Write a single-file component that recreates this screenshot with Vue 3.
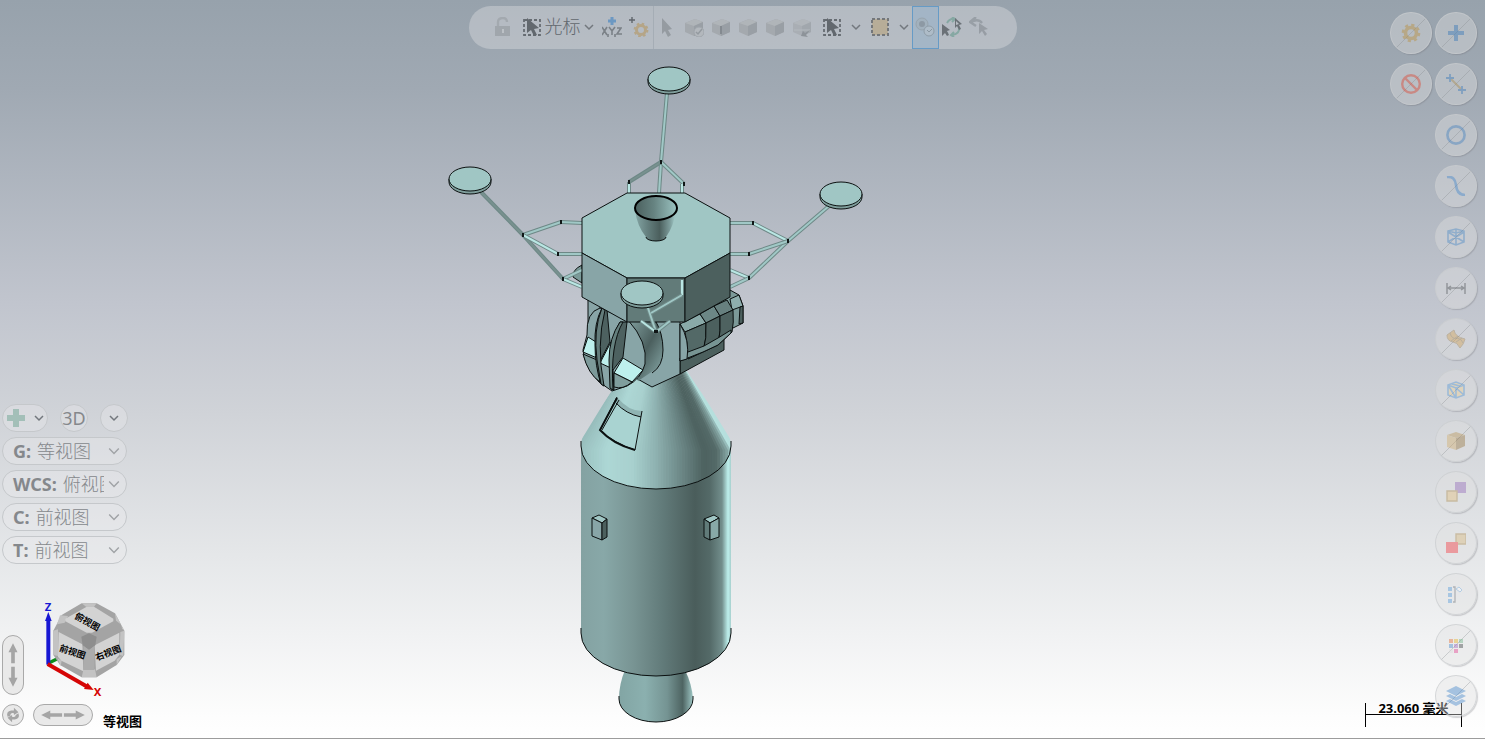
<script setup>
import { ref } from 'vue'

const cube = '<path d="M1 6 11 2 19 5 19 15 10 19 1 15Z" fill="#a4a9ae"/><path d="M1 6 11 2 19 5 10 9Z" fill="#b0b5b9"/><path d="M10 9 19 5V15L10 19Z" fill="#999fa5"/>'
const selectCursor = '<rect x="2" y="3" width="16" height="15" fill="none" stroke="#666c72" stroke-width="1.800" stroke-dasharray="3 2"/><path d="M5 1V16L9 13 12 19 15 18 12 12 17 11Z" fill="#62686e"/>'
const gear = '<g fill="none" stroke="#b98a2e"><circle cx="10" cy="10" r="5.500" stroke-width="3.600"/><circle cx="10" cy="10" r="8" stroke-width="2.600" stroke-dasharray="3.140 3.140"/></g>'

const icons = {
  lock: '<path d="M5 10V5Q5 1 10 1 14 1 14 5" fill="none" stroke="#a3a9af" stroke-width="2.400"/><path d="M2 9H17V19H2Z" fill="#a0a6ac"/><path d="M10 12V16" stroke="#bcc1c6" stroke-width="2"/>',
  selectCursor,
  xyz: '<path d="M10 0V8M6 4H14" stroke="#6c98c2" stroke-width="3"/><g fill="none" stroke="#7b8187" stroke-width="1.600"><path d="M0 10 5 18M5 10 0 18M7 10 10 14 13 10M10 14V18M15 11H19L15 17H20"/><path d="M6 17V20M13 17V20"/></g>',
  plusGear: '<path d="M3 0V6M0 3H6" stroke="#60666c" stroke-width="1.400"/><g fill="none" stroke="#b5a587"><circle cx="12" cy="13" r="4.500" stroke-width="3"/><circle cx="12" cy="13" r="6.400" stroke-width="2" stroke-dasharray="2.510 2.510"/></g>',
  cursor: '<path d="M5 1V17L8 14 11 20 14 18 11 13 15 12Z" fill="#959ba1"/>',
  cubeCheck: cube + '<circle cx="15" cy="15" r="5" fill="#b3b8bd" stroke="#a0a6ac"/><path d="M12 15 14 17 18 12" fill="none" stroke="#949aa0" stroke-width="1.500"/>',
  cubeEdge: cube + '<path d="M10 9V17" stroke="#848a90" stroke-width="2"/>',
  cube,
  cubeArrow: '<g opacity=".7">' + cube + '</g><path d="M2 13H18" stroke="#b3b9be"/><path d="M9 19 11 14 13 16 18 13 14 18 16 20Z" fill="#8d9399"/>',
  area: '<rect x="2" y="2" width="16" height="16" fill="#b7ad98" stroke="#74777a" stroke-width="2" stroke-dasharray="3 2"/>',
  solids: '<circle cx="7" cy="7" r="6" fill="#a2b1bd" stroke="#97a4ae"/><circle cx="7" cy="7" r="3" fill="#8d99a4"/><circle cx="14" cy="14" r="5" fill="#aebcc8" stroke="#8f9da8"/><path d="M12 13 14 15 17 12" fill="none" stroke="#8997a2"/>',
  swap: '<path d="M5 6Q8 1 13 2M17 10Q18 17 10 18M10 0 13 2 10 5M12 15 9 18 12 20M3 13Q4 16 6 17" fill="none" stroke="#86a8a3" stroke-width="2"/><path d="M0 7V19L3 16 5 19 7 18 5 14 8 13ZM13 1V11L15 9 17 13 19 12 17 8 20 7Z" fill="#6b7177"/><path d="M14 4V8L17 7Z" fill="#b7bdc3"/>',
  undo: '<path d="M2 5Q9 1 13 6M7 0 1 5 7 9" fill="none" stroke="#989fa6" stroke-width="2.400"/><path d="M10 6V17L13 14 16 19 18 17 15 13 19 12Z" fill="#979da4"/>',
  gear,
  forbid: '<g fill="none" stroke="#e03b25" stroke-width="2.400"><circle cx="10" cy="10" r="8.800"/><path d="M4 4 16 16"/></g>',
  plus: '<path d="M10 2V18M2 10H18" stroke="#2a71b8" stroke-width="4"/>',
  line: '<path d="M5 5 15 15" stroke="#a88743" stroke-width="2"/><path d="M4 0V8M0 4H8M16 12V20M12 16H20" stroke="#2a71b8" stroke-width="1.800"/>',
  circle: '<circle cx="10" cy="10" r="8.600" fill="none" stroke="#3a7bbe" stroke-width="2.600"/>',
  curve: '<path d="M1 1Q9 0 10 9 11 19 19 19" fill="none" stroke="#3a82cb" stroke-width="2.600"/>',
  wireCube: '<g fill="none" stroke="#3f83c5" stroke-width="1.600"><path d="M2 4 10 2 18 4V15L10 18 2 15ZM2 4 10 6 18 4M10 2V18M2 15 18 5M2 5 18 15"/></g>',
  dimension: '<path d="M1 5V16M19 5V16M1 10H19M5 8 2 10 5 12M15 8 18 10 15 12" fill="none" stroke="#3f4347" stroke-width="1.500"/>',
  surface: '<path d="M1 6 8 1Q9 8 19 10Q18 15 14 19Q11 13 7 13 1 12 1 6Z" fill="#d4a14c" stroke="#9c8255"/><path d="M4 4Q6 11 11 9 16 10 17 14M5 12 12 7M10 13 16 9" fill="none" stroke="#947a4b"/>',
  mesh: '<path d="M2 5 10 2 18 5V15L10 18 2 15Z" fill="#efcf91"/><path d="M2 5 10 2 18 5V15L10 18 2 15ZM2 5 10 8 18 5M10 8V18M2 5 10 18M10 8 18 15M6 4 14 6" fill="none" stroke="#4c92d6" stroke-width="1.600"/>',
  solid: '<path d="M1 4 10 1 19 4 10 7Z" fill="#b6904f"/><path d="M1 4 10 7V19L1 16Z" fill="#d1ab67"/><path d="M10 7 19 4V15L10 19Z" fill="#947138"/>',
  planes: '<path d="M9 0H20V11H9Z" fill="#8f62b8"/><path d="M1 9H11V19H1Z" fill="#e4be79" stroke="#a98546" stroke-width="1.400"/>',
  planesRed: '<path d="M10 1H20V11H10Z" fill="#d9b878" stroke="#a98546" stroke-width="1.400"/><path d="M0 9H12V20H0Z" fill="#f52e35"/>',
  tree: '<path d="M2 3H6V7H2ZM2 9H6V13H2ZM2 15H6V19H2Z" fill="#4b95d8"/><path d="M7 3H9V18H7" fill="none" stroke="#60666c" stroke-width="1.300"/><path d="M10 5 13 3 16 6 14 8Z" fill="#fff" stroke="#68a6dc"/>',
  palette: '<path d="M3 4H7V8H3Z" fill="#e5672a"/><path d="M8 4H12V8H8Z" fill="#e6ad18"/><path d="M13 4H17V8H13Z" fill="#68b183"/><path d="M3 9H7V13H3Z" fill="#3b83cb"/><path d="M8 9H12V13H8Z" fill="#9863bd"/><path d="M13 9H17V13H13Z" fill="#34373a"/><path d="M3 14H7V18H3Z" fill="#ddd"/><path d="M8 14H12V18H8Z" fill="#e4358c"/>',
  layers: '<path d="M0 5 10 0 20 5 10 10Z" fill="#367fc9"/><path d="M0 10 4 8 10 11 16 8 20 10 10 15ZM0 15 4 13 10 16 16 13 20 15 10 20Z" fill="#367fc9"/>'
}

const filterTools = [
  { icon: 'cursor', label: '选择' },
  { icon: 'cubeCheck', label: '选择实体' },
  { icon: 'cubeEdge', label: '选择边界' },
  { icon: 'cube', label: '选择面' },
  { icon: 'cube', label: '选择主体' },
  { icon: 'cubeArrow', label: '选择背面' }
]

const endTools = [
  { icon: 'solids', label: '验证选择', active: true },
  { icon: 'swap', label: '反选' },
  { icon: 'undo', label: '选择上次' }
]

const leftPalette = [
  { icon: 'gear', label: '设置', slash: true },
  { icon: 'forbid', label: '清除', slash: true }
]

const rightPalette = [
  { icon: 'plus', label: '点', slash: true },
  { icon: 'line', label: '线', slash: true },
  { icon: 'circle', label: '圆弧', slash: true },
  { icon: 'curve', label: '曲线', slash: true },
  { icon: 'wireCube', label: '线框', slash: true },
  { icon: 'dimension', label: '标注', slash: true },
  { icon: 'surface', label: '曲面', slash: true },
  { icon: 'mesh', label: '网格', slash: true },
  { icon: 'solid', label: '实体', slash: true },
  { icon: 'planes', label: '结果' },
  { icon: 'planesRed', label: '群组' },
  { icon: 'tree', label: '命名' },
  { icon: 'palette', label: '颜色', slash: true },
  { icon: 'layers', label: '层别', slash: true }
]

const viewNames = ['等视图', '俯视图', '前视图', '右视图']
const views = ref([
  { key: 'G', value: '等视图' },
  { key: 'WCS', value: '俯视图' },
  { key: 'C', value: '前视图' },
  { key: 'T', value: '前视图' }
])

// Cone shading: thin wedges from the apex, coloured along the stops
const stops = [
  [0, [150, 188, 187]],
  [0.2, [173, 215, 213]],
  [0.36, [168, 208, 206]],
  [0.5, [143, 178, 177]],
  [0.65, [110, 138, 137]],
  [0.8, [77, 98, 96]],
  [0.88, [84, 106, 104]],
  [0.95, [135, 168, 166]],
  [0.98, [190, 236, 233]],
  [1, [176, 214, 212]]
]

function shade(t) {
  let i = 1
  while (i < stops.length - 1 && t > stops[i][0]) i++
  const [t0, a] = stops[i - 1]
  const [t1, b] = stops[i]
  const k = (t - t0) / (t1 - t0)
  return `rgb(${a.map((v, n) => Math.round(v + (b[n] - v) * k)).join(',')})`
}

const wedgeCount = 60
const wedges = Array.from({ length: wedgeCount }, (_, i) => {
  const x0 = 575 + (161 * i) / wedgeCount
  const x1 = 575 + (161 * (i + 1)) / wedgeCount + 1
  return { points: `656,318 ${x0},450 ${x0},500 ${x1},500 ${x1},450`, fill: shade((i + 0.5) / wedgeCount) }
})

const legs = [
  [481, 192, 523, 235, 'dark'], [523, 235, 563, 279, 'dark'],
  [523, 235, 561, 222, 'mid'], [561, 222, 582, 223, 'mid'],
  [523, 235, 558, 254, 'light'], [558, 254, 582, 254, 'mid'],
  [563, 279, 582, 270, 'mid'], [563, 279, 582, 287, 'light'],
  [667, 93, 661, 162, 'mid'], [661, 162, 659, 193, 'mid'],
  [661, 162, 629, 182, 'dark'], [629, 182, 629, 193, 'light'],
  [661, 162, 684, 184, 'mid'], [682, 184, 682, 193, 'light'],
  [829, 206, 788, 241, 'mid'], [788, 241, 749, 278, 'mid'],
  [788, 241, 753, 223, 'light'], [753, 223, 730, 223, 'mid'],
  [788, 241, 749, 254, 'mid'], [749, 254, 730, 254, 'mid'],
  [749, 278, 730, 270, 'light'], [749, 278, 730, 287, 'mid']
]

const frontLegs = [
  [647, 305, 656, 332, 'mid'],
  [656, 332, 641, 321, 'light'],
  [656, 332, 670, 321, 'mid'],
  [682, 280, 682, 295, 'light'],
  [682, 295, 651, 313, 'mid']
]

const joints = [
  [523, 235], [561, 222], [558, 254], [563, 279], [661, 162], [629, 182],
  [684, 184], [788, 241], [753, 223], [749, 254], [749, 278]
]

const pads = [[669, 79], [470, 179], [841, 194], [642, 293]]
</script>

<template>
  <main class="viewport">
    <svg class="model" viewBox="0 0 1485 740" aria-hidden="true">
      <defs>
        <linearGradient id="barrel">
          <stop offset="0" stop-color="#84a2a2" />
          <stop offset=".15" stop-color="#88a8a8" />
          <stop offset=".35" stop-color="#789493" />
          <stop offset=".55" stop-color="#617a79" />
          <stop offset=".76" stop-color="#4a5d5b" />
          <stop offset=".86" stop-color="#546a68" />
          <stop offset=".94" stop-color="#728e8c" />
          <stop offset=".98" stop-color="#bdf0ed" />
          <stop offset="1" stop-color="#a7cfcd" />
        </linearGradient>
        <linearGradient id="engine">
          <stop offset="0" stop-color="#82a5a4" />
          <stop offset=".35" stop-color="#8bb0af" />
          <stop offset=".65" stop-color="#759493" />
          <stop offset=".86" stop-color="#4e6462" />
          <stop offset="1" stop-color="#9fc8c6" />
        </linearGradient>
        <linearGradient id="nozzle">
          <stop offset="0" stop-color="#84a5a4" />
          <stop offset=".3" stop-color="#65807f" />
          <stop offset=".6" stop-color="#4b5f5d" />
          <stop offset=".85" stop-color="#7c9b9a" />
          <stop offset="1" stop-color="#a5cfcd" />
        </linearGradient>
        <linearGradient id="bowl">
          <stop offset="0" stop-color="#4b605e" />
          <stop offset=".45" stop-color="#668381" />
          <stop offset="1" stop-color="#9cc4c2" />
        </linearGradient>
        <linearGradient id="drum" x1="0" y1="0" x2="1" y2="1">
          <stop offset="0" stop-color="#81a09f" />
          <stop offset=".5" stop-color="#4b5f5e" />
          <stop offset="1" stop-color="#8db0af" />
        </linearGradient>
        <clipPath id="cone">
          <path d="M626 370H686L724 426Q731 437 731 446A75 43 0 0 1 581 446Q581 437 587 427Z" />
        </clipPath>
      </defs>

      <!-- service module -->
      <path d="M625 670Q619 684 619 699A37 23 0 0 0 693 699Q692 684 685 670Z" fill="url(#engine)" />
      <path class="edge" d="M619 696V699A37 23 0 0 0 693 699V696" />
      <path d="M581 445V633A75 43 0 0 0 731 633V445Z" fill="url(#barrel)" />
      <path class="edge" d="M581 628V633A75 43 0 0 0 731 633V628" />
      <g clip-path="url(#cone)">
        <polygon v-for="(w, i) in wedges" :key="i" :points="w.points" :fill="w.fill" />
      </g>
      <path class="edge" d="M581 441V446A75 43 0 0 0 731 446V441" />
      <path d="M617 397 600 430Q613 443 635 450L642 411Q628 411 617 397Z" fill="#a9d3d1" />
      <path d="M617 397Q628 411 642 411L641 417Q626 414 616 403Z" fill="#8fb3b2" />
      <path class="edge" d="M617 397 600 430Q613 443 635 450L642 411M619 400 602 430M616 403Q626 414 641 417" />
      <path class="edge" d="M617 398 600 430Q613 444 635 450" stroke-width="2" />

      <g class="outlined">
        <path d="M592 518 599 515 607 519 602 523Z" fill="#a0c6c4" />
        <path d="M592 518 602 523V540L592 536Z" fill="#88a5a7" />
        <path d="M602 523 607 519V537L602 540Z" fill="#4c605e" />
        <path d="M704 519 714 515 719 518 710 523Z" fill="#a0c6c4" />
        <path d="M704 519 710 523V540L704 537Z" fill="#617b79" />
        <path d="M710 523 719 518V537L710 540Z" fill="#88a9a8" />
      </g>

      <!-- ascent stage -->
      <g class="outlined">
        <path d="M582 265Q572 270 573 277L582 283Z" fill="#7b9a99" />
        <path d="M588 298V325L600 310V300Z" fill="#88a5a7" />
        <path d="M680 360 724 337V350L680 374Z" fill="#4c605e" />
        <path d="M625 315H680V374L652 387 625 372Z" fill="#88a5a7" />
        <path d="M715 300 730 290 739 295 743 306V323L733 328 724 310Z" fill="#7c9998" />
        <path d="M730 299 739 295 743 306 732 310Z" fill="#8eaead" />
        <path d="M740 307 743 306V323L739 324Z" fill="#4c605e" />
        <path d="M680 324 700 314 706 323 685 332Z" fill="#8aaaa9" />
        <path d="M700 314 714 306 720 316 706 323Z" fill="#6c8786" />
        <path d="M714 306 727 300 733 310 720 316Z" fill="#67807f" />
        <path d="M685 332 706 323Q707 338 703 352L688 359Q688 344 685 332Z" fill="#536967" />
        <path d="M706 323 720 316Q721 331 718 345L703 352Q707 338 706 323Z" fill="#4c605e" />
        <path d="M720 316 733 310Q734 323 732 332L718 345Q721 331 720 316Z" fill="#4e6260" />
        <path d="M688 352 704 346 718 338 731 330V333L718 345 703 352 680 361V358Z" fill="#779493" />
        <path d="M680 324Q690 340 687 359L680 361Z" fill="#88a5a7" />
      </g>
      <g class="outlined">
        <path d="M628 320H655Q663 333 663 350 663 366 650 373L638 381 630 360Z" fill="url(#drum)" stroke="none" />
        <path d="M655 320Q663 333 663 350 663 366 652 373" fill="none" />
        <path d="M600 308Q586 312 587 335L583 350Q584 366 599 382L612 391 627 386Q641 379 645 364 648 342 628 320Z" fill="#88a5a7" />
        <path d="M588 337 596 342 597 358 583 352Z" fill="#bdf0ed" />
        <path d="M600 363 611 342V368Z" fill="#bdf0ed" />
        <path d="M623 358 643 370 632 382 614 373Z" fill="#bdf0ed" />
        <path d="M583 354 597 360 600 382Q588 374 583 354Z" fill="#7d9a9a" />
        <path d="M602 308Q594 323 595 345 595 366 601 384L604 386Q599 370 600 361L610 342 607 310Z" fill="#4d6160" />
        <path d="M602 308Q593 330 597 360L601 384 604 386Q596 345 605 310Z" fill="#637c7b" />
        <path d="M620 322Q610 338 610 360L611 389 614 390 613 370 623 357 627 322Z" fill="#4d6160" />
        <path d="M620 322Q609 338 609 360L610 388 613 390Q610 344 623 322Z" fill="#65807e" />
        <path d="M614 373 632 382Q623 390 614 387Z" fill="#7f9e9d" />
      </g>

      <!-- descent stage and landing gear -->
      <g class="strut">
        <g v-for="(l, i) in legs" :key="i">
          <line :x1="l[0]" :y1="l[1]" :x2="l[2]" :y2="l[3]" class="casing" />
          <line :x1="l[0]" :y1="l[1]" :x2="l[2]" :y2="l[3]" :class="l[4]" />
        </g>
      </g>
      <rect v-for="(j, i) in joints" :key="i" :x="j[0] - 1" :y="j[1] - 2" width="2" height="4" fill="#101616" />
      <g class="outlined">
        <path d="M582 218 627 193H685L730 218V253L685 278H627L582 253Z" fill="#a0c6c4" />
        <path d="M582 253 627 278V322L582 297Z" fill="#88a5a7" />
        <path d="M627 278H685V322H627Z" fill="#627b79" />
        <path d="M685 278 730 253V297L685 322Z" fill="#4c605e" />
      </g>
      <path d="M635 210Q637 226 646 237A10 4 0 0 0 666 237Q674 226 676 210Z" fill="url(#nozzle)" />
      <path class="edge" d="M646 237A10 4 0 0 0 666 237" />
      <ellipse cx="656" cy="208" rx="21" ry="12" fill="url(#bowl)" stroke="#000" stroke-width="2" />

      <g class="strut">
        <g v-for="(l, i) in frontLegs" :key="i">
          <line :x1="l[0]" :y1="l[1]" :x2="l[2]" :y2="l[3]" class="casing" />
          <line :x1="l[0]" :y1="l[1]" :x2="l[2]" :y2="l[3]" :class="l[4]" />
        </g>
      </g>
      <path d="M654 330H658V333H654Z" fill="#101616" />
      <g v-for="(p, i) in pads" :key="i" class="outlined">
        <path :d="`M${p[0] - 21} ${p[1]}v3a21 12 0 0 0 42 0v-3z`" fill="#7f9e9c" />
        <ellipse :cx="p[0]" :cy="p[1]" rx="21" ry="12" fill="#a0c6c4" />
      </g>
    </svg>

    <div class="toolbar" role="toolbar" aria-label="选择工具栏">
      <button class="tool" aria-label="锁定"><svg class="icon" viewBox="0 0 20 20" v-html="icons.lock"></svg></button>
      <button class="tool cursor-menu">
        <svg class="icon" viewBox="0 0 20 20" v-html="icons.selectCursor"></svg>
        <span>光标</span>
        <svg class="chevron" viewBox="0 0 10 10"><path d="M1 3 5 7 9 3" /></svg>
      </button>
      <button class="tool" aria-label="坐标"><svg class="icon" viewBox="0 0 20 20" v-html="icons.xyz"></svg></button>
      <button class="tool" aria-label="自动抓点"><svg class="icon" viewBox="0 0 20 20" v-html="icons.plusGear"></svg></button>
      <span class="divider"></span>
      <button v-for="(t, i) in filterTools" :key="i" class="tool" :aria-label="t.label">
        <svg class="icon" viewBox="0 0 20 20" v-html="icons[t.icon]"></svg>
      </button>
      <button class="tool wide" aria-label="选择方式"><svg class="icon" viewBox="0 0 20 20" v-html="icons.selectCursor"></svg></button>
      <button class="tool narrow" aria-label="更多选择方式">
        <svg class="chevron" viewBox="0 0 10 10"><path d="M1 3 5 7 9 3" /></svg>
      </button>
      <button class="tool wide" aria-label="窗选"><svg class="icon" viewBox="0 0 20 20" v-html="icons.area"></svg></button>
      <button class="tool narrow" aria-label="更多窗选">
        <svg class="chevron" viewBox="0 0 10 10"><path d="M1 3 5 7 9 3" /></svg>
      </button>
      <button v-for="t in endTools" :key="t.icon" class="tool" :class="{ active: t.active }" :aria-label="t.label">
        <svg class="icon" viewBox="0 0 20 20" v-html="icons[t.icon]"></svg>
      </button>
    </div>

    <section class="views">
      <div class="chips">
        <button class="chip add" aria-label="新建视图">
          <svg class="icon" viewBox="0 0 20 20"><path d="M10 1V19M1 10H19" stroke="#a3bfb8" stroke-width="6" /></svg>
          <svg class="chevron" viewBox="0 0 10 10"><path d="M1 3 5 7 9 3" /></svg>
        </button>
        <button class="chip round">3D</button>
        <button class="chip round" aria-label="展开">
          <svg class="chevron" viewBox="0 0 10 10"><path d="M1 3 5 7 9 3" /></svg>
        </button>
      </div>
      <label v-for="v in views" :key="v.key" class="view">
        <b>{{ v.key }}:</b>
        <select v-model="v.value">
          <option v-for="n in viewNames" :key="n">{{ n }}</option>
        </select>
        <svg class="chevron large" viewBox="0 0 10 10"><path d="M1 3 5 7 9 3" /></svg>
      </label>

      <div class="navigator">
        <button class="nav tall" aria-label="上下旋转">
          <svg viewBox="0 0 22 60"><path d="M11 6 16 16H13V28H9V16H6ZM11 54 16 44H13V32H9V44H6Z" /></svg>
        </button>
        <svg class="gnomon" viewBox="126 27 258 288" role="img" aria-label="视图方块">
          <path d="M148 218 172 206" stroke="#0c8a18" stroke-width="10" />
          <path d="M245 40H290L345 70 373 122V195L350 225 290 262H245L180 225 160 195V122L185 75Z" fill="#a4a4a4" />
          <g fill="#c3c3c3">
            <path d="M245 40H290L282 50H258ZM180 76 204 78 194 98 171 103ZM345 70 348 92 364 104 366 116 373 122ZM160 122 174 118V198L160 195ZM373 122 361 126 359 195 370 198ZM245 262 250 240 285 238 290 262ZM172 205 185 212 182 228ZM350 208 365 198 350 225Z" />
          </g>
          <g fill="#d3d3d3">
            <path d="M260 50H282L340 86V94L276 128H260L196 94V86Z" />
            <path d="M176 126 247 163 250 244 184 212 174 200Z" />
            <path d="M284 166 358 128V194L344 212 288 242Z" />
          </g>
          <path d="M244 140 267 130 290 140 286 166 267 180 248 166Z" fill="#8e8e8e" />
          <path d="M251 168 267 180 283 168V240H251Z" fill="#acacac" />
          <g class="face">
            <text transform="translate(222 84) rotate(29)">俯视图</text>
            <text transform="translate(176 182) rotate(18)">前视图</text>
            <text transform="translate(290 212) rotate(-21)">右视图</text>
          </g>
          <path d="M145 224V88" stroke="#1717d3" stroke-width="12" />
          <path d="M145 66 155 93H135Z" fill="#1717d3" />
          <path d="M143 222 262 290" stroke="#d50505" stroke-width="12" />
          <path d="M281 300 252 297 263 278Z" fill="#d50505" />
          <text class="axis" x="134" y="62" fill="#1717d3">Z</text>
          <text class="axis" x="281" y="318" fill="#d50505">X</text>
        </svg>
        <button class="nav small" aria-label="旋转">
          <svg viewBox="0 0 22 22"><path d="M5 13Q3 7 9 6H12V3L17 8 12 11V9Q8 8 8 12ZM17 9Q19 15 13 16H10V19L5 14 10 11V13Q14 14 14 11Z" /></svg>
        </button>
        <div class="nav-row">
          <button class="nav long" aria-label="左右旋转">
            <svg viewBox="0 0 60 22"><path d="M6 11 16 6V9H29V13H16V16ZM54 11 44 6V9H31V13H44V16Z" /></svg>
          </button>
          <strong class="caption">等视图</strong>
        </div>
      </div>
    </section>

    <div class="scale">
      <strong>23.060 毫米</strong>
    </div>

    <nav class="palette" aria-label="快速限定">
      <div v-for="(col, c) in [leftPalette, rightPalette]" :key="c" class="column">
        <button v-for="p in col" :key="p.icon" class="disc" :class="{ slash: p.slash }" :aria-label="p.label">
          <svg class="icon" viewBox="0 0 20 20" v-html="icons[p.icon]"></svg>
        </button>
      </div>
    </nav>
  </main>
</template>

<style>
body {
  margin: 0;
}
</style>

<style scoped>
.viewport {
  position: relative;
  box-sizing: border-box;
  min-height: 100vh;
  display: flex;
  align-items: flex-end;
  overflow: hidden;
  background: linear-gradient(#97a2ac 0%, #a0a9b3 12%, #c1c5ce 41%, #d0d3d8 56%, #e5e7e9 75%, #fdfdfd 97%, #fff 100%);
  font-family: "Noto Sans", "Noto Sans CJK SC", sans-serif;
}

.viewport::after {
  content: "";
  position: absolute;
  left: 0;
  right: 0;
  bottom: 0;
  height: 1px;
  background: #fff;
  border-top: 1px solid #9c9c9c;
}

button,
select {
  margin: 0;
  padding: 0;
  border: 0;
  background: none;
  font: inherit;
  color: inherit;
}

.model {
  position: absolute;
  inset: 0;
  width: 100%;
  height: 100%;
}

.edge {
  fill: none;
  stroke: #0b1010;
}

.outlined {
  stroke: #0b1010;
  stroke-linejoin: round;
}

.strut .casing {
  stroke: #6d8886;
  stroke-width: 4;
}

.strut .dark {
  stroke: #78918f;
  stroke-width: 2;
}

.strut .mid {
  stroke: #a0c8c6;
  stroke-width: 2;
}

.strut .light {
  stroke: #b9e6e3;
  stroke-width: 2;
}

/* top toolbar */
.toolbar {
  position: absolute;
  top: 6px;
  left: 50%;
  transform: translateX(-50%);
  display: flex;
  height: 43px;
  padding: 0 24px 0 21px;
  border-radius: 22px;
  background: rgba(225, 225, 228, 0.38);
}

.tool {
  box-sizing: border-box;
  width: 27px;
  padding-bottom: 2px;
  display: flex;
  align-items: center;
  justify-content: center;
}

.tool.wide {
  width: 32px;
}

.tool.narrow {
  width: 16px;
}

.tool.active {
  border: 1px solid #669bc6;
  background: rgba(145, 176, 201, 0.5);
}

.cursor-menu {
  width: 82px;
  gap: 3px;
  color: #62686e;
  font-size: 18px;
  font-weight: 300;
  line-height: 24px;
}

.cursor-menu span {
  padding-bottom: 2px;
}

.divider {
  width: 1px;
  background: #a5adb5;
}

.icon {
  width: 20px;
  height: 20px;
  flex: none;
}

.chevron {
  width: 10px;
  height: 10px;
  flex: none;
  fill: none;
  stroke: #73787e;
  stroke-width: 1.5;
}

.chevron.large {
  width: 12px;
  height: 12px;
  stroke: #a0a3a6;
  stroke-width: 1.2;
}

/* view panel */
.views {
  position: relative;
  display: flex;
  flex-direction: column;
  gap: 5px;
  padding: 0 0 14px 2px;
  color: #85888c;
  font-size: 18px;
  line-height: 26px;
}

.chips {
  display: flex;
  gap: 12px;
}

.chip,
.view {
  box-sizing: border-box;
  height: 28px;
  display: flex;
  align-items: center;
  border: 1px solid #c5c8cb;
  border-radius: 14px;
  background: rgba(235, 236, 237, 0.35);
}

.chip.add {
  width: 46px;
  padding: 0 3px;
  justify-content: space-between;
}

.chip.round {
  width: 28px;
  justify-content: center;
}

.view {
  width: 125px;
  gap: 6px;
  padding: 0 6px 0 10px;
}

.view select {
  appearance: none;
  flex: 1;
  min-width: 0;
  height: 26px;
  outline: 0;
  overflow: hidden;
  text-overflow: clip;
  font-weight: 300;
}

.view .chevron {
  margin-left: -2px;
  pointer-events: none;
}

.navigator {
  display: grid;
  grid-template-columns: 22px auto;
  gap: 9px;
  align-items: end;
  margin-top: 30px;
}

.nav {
  box-sizing: border-box;
  display: flex;
  border: 1px solid #a9a9a9;
  border-radius: 11px;
  background: #e9e9e9;
}

.nav svg {
  width: 100%;
  height: 100%;
  fill: #a5a5a5;
}

.nav.tall {
  width: 22px;
  height: 60px;
}

.nav.small {
  width: 22px;
  height: 22px;
}

.nav.long {
  width: 60px;
  height: 22px;
}

.nav-row {
  display: flex;
  align-items: center;
  gap: 10px;
  height: 22px;
}

.gnomon {
  width: 86px;
  height: 96px;
  margin-left: 9px;
  overflow: visible;
}

.face {
  fill: #000;
  font-size: 27px;
  font-weight: 700;
}

.axis {
  font-size: 34px;
  font-weight: 700;
}

.caption {
  padding-top: 12px;
  color: #000;
  font-size: 13px;
  line-height: 16px;
}

/* scale bar */
.scale {
  position: absolute;
  right: 23px;
  bottom: 13px;
  width: 95px;
  height: 24px;
  border: solid #000;
  border-width: 0 1px;
  text-align: center;
  font-size: 13px;
  line-height: 11px;
}

.scale strong {
  display: block;
  border-bottom: 1px solid #000;
}

/* quick mask palette */
.palette {
  position: absolute;
  top: 12px;
  right: 8px;
  display: flex;
  gap: 3px;
}

.column {
  display: flex;
  flex-direction: column;
  gap: 9px;
}

.disc {
  box-sizing: border-box;
  width: 42px;
  height: 42px;
  display: flex;
  align-items: center;
  justify-content: center;
  border: 1px solid rgba(200, 202, 205, 0.7);
  border-radius: 50%;
  background: rgba(225, 225, 226, 0.4);
  box-shadow: 1px 1px 1px rgba(110, 110, 115, 0.3);
}

.disc.slash {
  background: linear-gradient(135deg, transparent 49%, rgba(130, 135, 140, 0.35) 49%, rgba(130, 135, 140, 0.35) 51%, transparent 51%), rgba(225, 225, 226, 0.4);
}

.disc .icon {
  opacity: 0.4;
}
</style>
